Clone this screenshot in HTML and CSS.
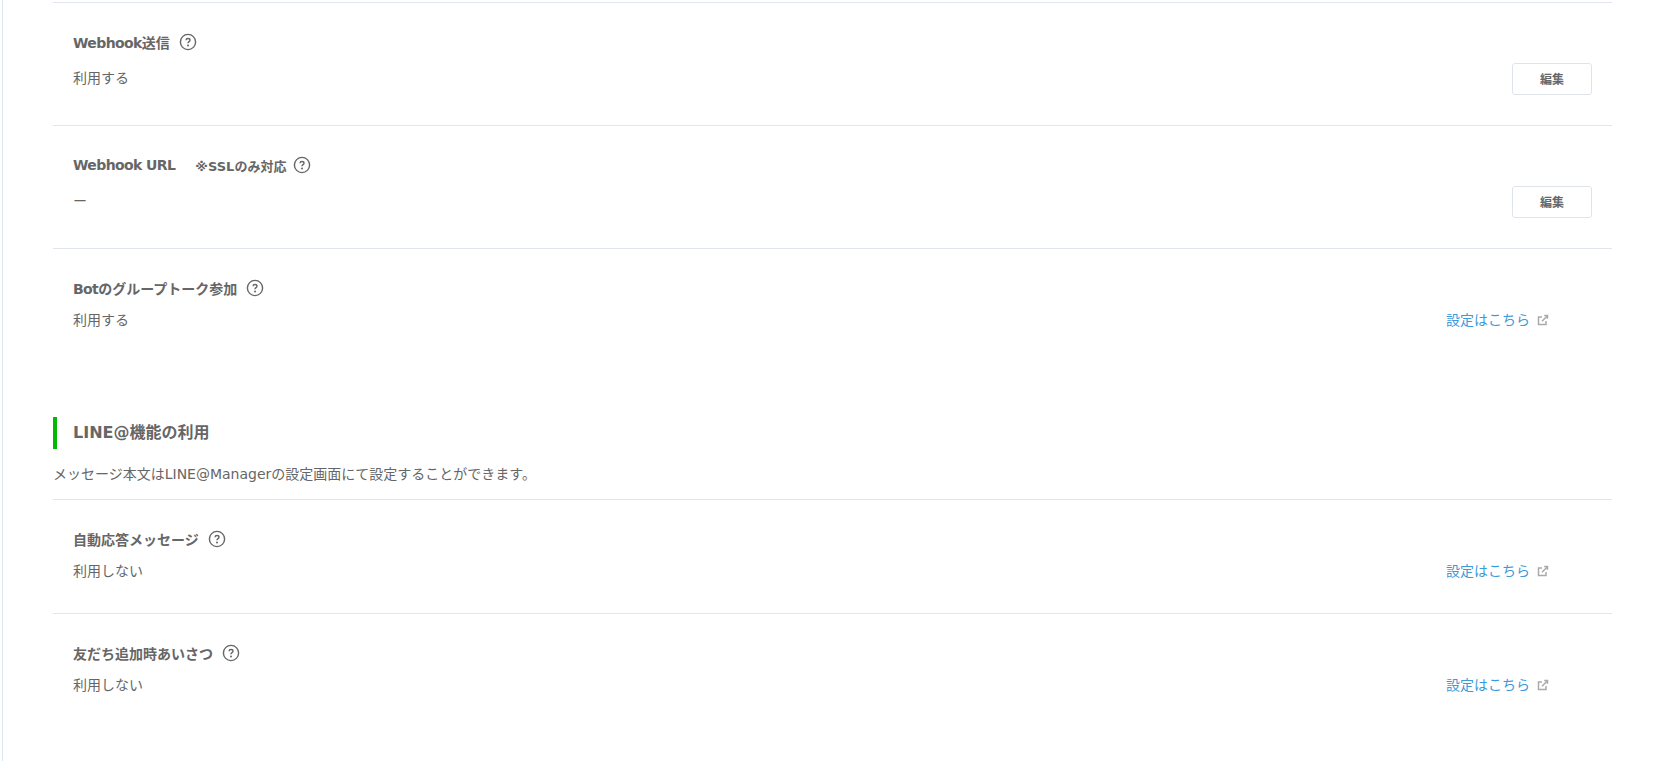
FILE: index.html
```html
<!DOCTYPE html>
<html lang="ja">
<head>
    <meta charset="UTF-8">
    <title>LINE Messaging API 設定</title>
    <link rel="stylesheet" href="styles.css">
</head>
<body>
    <main class="page">
        <section class="settings">
            <div class="row">
                <div class="row-title">
                    <span><span class="en">Webhook</span>送信</span>
                    <svg class="help" viewBox="0 0 18 18"><circle cx="9" cy="9" r="7.6"/><path d="M7 7.300c.1-1.100.9-1.800 2-1.800s2 .7 2 1.700c0 1.400-2 1.500-2 3"/><circle class="dot" cx="9" cy="12.400" r="1"/></svg>
                </div>
                <div class="row-value has-btn">
                    <span>利用する</span>
                    <button class="edit-btn">編集</button>
                </div>
            </div>
            <div class="row">
                <div class="row-title">
                    <span class="en">Webhook URL</span>
                    <span class="note">※SSLのみ対応</span>
                    <svg class="help" viewBox="0 0 18 18"><circle cx="9" cy="9" r="7.6"/><path d="M7 7.300c.1-1.100.9-1.800 2-1.800s2 .7 2 1.700c0 1.400-2 1.500-2 3"/><circle class="dot" cx="9" cy="12.400" r="1"/></svg>
                </div>
                <div class="row-value has-btn">
                    <span>ー</span>
                    <button class="edit-btn">編集</button>
                </div>
            </div>
            <div class="row">
                <div class="row-title">
                    <span><span class="en">Bot</span>のグループトーク参加</span>
                    <svg class="help" viewBox="0 0 18 18"><circle cx="9" cy="9" r="7.6"/><path d="M7 7.300c.1-1.100.9-1.800 2-1.800s2 .7 2 1.700c0 1.400-2 1.500-2 3"/><circle class="dot" cx="9" cy="12.400" r="1"/></svg>
                </div>
                <div class="row-value">
                    <span>利用する</span>
                    <a class="ext-link" href="#">設定はこちら<svg class="ext-icon" viewBox="0 0 12 12"><path d="M9 7v3.500H1.500V3H5"/><path d="M5 7.200l5-5M7.200 1.500h3.300v3.300"/></svg></a>
                </div>
            </div>
        </section>

        <section class="settings second">
            <h2 class="section-title">LINE@機能の利用</h2>
            <p class="section-desc">メッセージ本文はLINE@Managerの設定画面にて設定することができます。</p>
            <div class="row">
                <div class="row-title">
                    <span>自動応答メッセージ</span>
                    <svg class="help" viewBox="0 0 18 18"><circle cx="9" cy="9" r="7.6"/><path d="M7 7.300c.1-1.100.9-1.800 2-1.800s2 .7 2 1.700c0 1.400-2 1.500-2 3"/><circle class="dot" cx="9" cy="12.400" r="1"/></svg>
                </div>
                <div class="row-value">
                    <span>利用しない</span>
                    <a class="ext-link" href="#">設定はこちら<svg class="ext-icon" viewBox="0 0 12 12"><path d="M9 7v3.500H1.500V3H5"/><path d="M5 7.200l5-5M7.200 1.500h3.300v3.300"/></svg></a>
                </div>
            </div>
            <div class="row">
                <div class="row-title">
                    <span>友だち追加時あいさつ</span>
                    <svg class="help" viewBox="0 0 18 18"><circle cx="9" cy="9" r="7.6"/><path d="M7 7.300c.1-1.100.9-1.800 2-1.800s2 .7 2 1.700c0 1.400-2 1.500-2 3"/><circle class="dot" cx="9" cy="12.400" r="1"/></svg>
                </div>
                <div class="row-value">
                    <span>利用しない</span>
                    <a class="ext-link" href="#">設定はこちら<svg class="ext-icon" viewBox="0 0 12 12"><path d="M9 7v3.500H1.500V3H5"/><path d="M5 7.200l5-5M7.200 1.500h3.300v3.300"/></svg></a>
                </div>
            </div>
        </section>
    </main>
</body>
</html>
```

FILE: styles.css
```css
* {
    margin: 0;
    padding: 0;
    box-sizing: border-box;
}

body {
    font-family: "DejaVu Sans", "Noto Sans CJK JP", sans-serif;
    font-size: 14px;
    color: #666;
    background: #fff;
    overflow: hidden;
}

/* Main container */
.page {
    height: 761px;
    margin-left: 2px;
    padding: 2px 41px 0 50px;
    border-left: 1px solid #e0e6ef;
}

.second {
    margin-top: 46px;
}

/* Setting rows */
.row {
    height: 123px;
    padding: 27px 20px 0;
    border-top: 1px solid #e1e5ec;
}

.second .row {
    height: 114px;
}

.row-title {
    display: flex;
    align-items: center;
    gap: 9px;
    height: 24px;
    font-size: 14px;
    font-weight: 700;
}

.en {
    letter-spacing: -.6px;
}

.note {
    margin-left: 11px;
    margin-right: -2px;
    font-size: 13px;
}

.help {
    width: 18px;
    height: 18px;
    fill: none;
    stroke: #666;
    stroke-width: 1.400;
}

.help .dot {
    fill: #666;
    stroke: none;
}

.row-value {
    display: flex;
    align-items: center;
    justify-content: space-between;
    min-height: 22px;
    margin-top: 8px;
}

.row-value.has-btn {
    margin-top: 9px;
}

.has-btn span {
    padding-bottom: 4px;
}

.edit-btn {
    width: 80px;
    height: 32px;
    padding-bottom: 2px;
    background: #fff;
    border: 1px solid #dfe4ec;
    border-radius: 3px;
    color: #666;
    font-family: inherit;
    font-size: 12px;
    font-weight: 700;
}

.ext-link {
    display: flex;
    align-items: center;
    gap: 7px;
    margin-right: 43px;
    color: #3c9ad9;
    text-decoration: none;
}

.ext-icon {
    width: 12px;
    height: 12px;
    margin-top: 1px;
    fill: none;
    stroke: #aaa;
    stroke-width: 1.500;
}

/* Section header */
.section-title {
    height: 32px;
    padding-left: 16px;
    border-left: 4px solid #00b900;
    font-size: 16px;
    font-weight: 700;
    line-height: 31px;
}

.section-desc {
    margin: 14px 0;
    line-height: 22px;
}
```
